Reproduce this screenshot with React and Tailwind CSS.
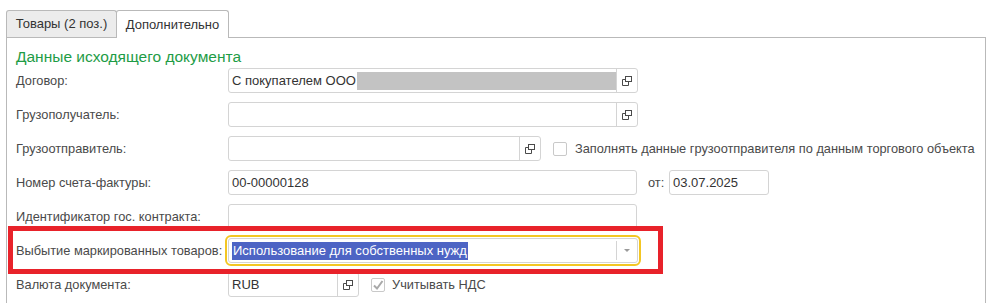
import { useState } from 'react';

function OpenIcon() {
  return (
    <svg width="10" height="10" viewBox="0 0 10 10" fill="none" stroke="#4a4a4a" strokeWidth="1">
      <rect x="3.5" y="0.5" width="6" height="5" />
      <path d="M3.5 3.5 H0.5 V9.5 H6.5 V5.5" />
    </svg>
  );
}

function Field({ width, value, button = false, children, className = '' }) {
  return (
    <div className={`flex h-[25px] shrink-0 items-stretch rounded-[3px] border border-[#d4d4d4] bg-white ${width} ${className}`}>
      <div className="flex min-w-0 flex-1 items-center overflow-hidden pl-[3px] text-[13px] text-[#333]">
        {children || value}
      </div>
      {button && (
        <div className="flex w-[21px] items-center justify-center border-l border-[#d4d4d4]">
          <OpenIcon />
        </div>
      )}
    </div>
  );
}

function Checkbox({ checked = false }) {
  return (
    <span className="flex h-[14px] w-[14px] items-center justify-center rounded-[2px] border border-[#c9c9c9] bg-white">
      {checked && (
        <svg width="12" height="12" viewBox="0 0 12 12" fill="none" stroke="#a9a9a9" strokeWidth="2">
          <path d="M2 6.5 L5 9.5 L10.5 2" />
        </svg>
      )}
    </span>
  );
}

function Row({ label, children }) {
  return (
    <div className="flex h-[25px] items-center">
      <div className="w-[212px] shrink-0 text-[12.8px] text-[#4a4a4a]">{label}</div>
      {children}
    </div>
  );
}

export default function App() {
  const [tab] = useState(1);

  return (
    <div className="h-[303px] w-[992px] overflow-hidden bg-white pt-[10px] font-['Liberation_Sans',Arial,sans-serif]">
      <div className="ml-[6px] flex h-[27px] items-stretch">
        <div className={`flex w-[111px] items-center justify-center rounded-t-[3px] border border-b-0 border-[#b9b9b9] text-[13px] text-[#333] ${tab === 0 ? 'bg-white' : 'bg-[#ececec]'}`}>
          Товары (2 поз.)
        </div>
        <div className="relative z-10 -ml-px flex h-[28px] w-[113px] items-center justify-center rounded-t-[3px] border border-b-0 border-[#b9b9b9] bg-white text-[13px] text-[#333]">
          Дополнительно
        </div>
      </div>

      <div className="relative ml-[6px] h-[300px] w-[980px] border border-[#b9b9b9] pl-[9px] pt-[9px]">
        <div className="h-[20px] text-[15.5px] leading-[20px] text-[#1e9c46]">Данные исходящего документа</div>

        <div className="mt-[1px] flex flex-col gap-[9px]">
          <Row label="Договор:">
            <Field width="w-[410px]" button>
              <span className="shrink-0">С покупателем ООО</span>
              <span className="ml-px h-[18px] w-[260px] shrink-0 bg-[#c3c3c3]" />
            </Field>
          </Row>

          <Row label="Грузополучатель:">
            <Field width="w-[410px]" button />
          </Row>

          <Row label="Грузоотправитель:">
            <Field width="w-[313px]" button />
            <div className="ml-[12px] flex items-center gap-[8px] text-[12.8px] text-[#4a4a4a]">
              <Checkbox />
              <span>Заполнять данные грузоотправителя по данным торгового объекта</span>
            </div>
          </Row>

          <Row label="Номер счета-фактуры:">
            <Field width="w-[409px]" value="00-00000128" />
            <span className="ml-[11px] w-[21px] text-[12.8px] text-[#4a4a4a]">от:</span>
            <Field width="w-[100px]" value="03.07.2025" />
          </Row>

          <Row label="Идентификатор гос. контракта:">
            <Field width="w-[409px]" />
          </Row>

          <Row label="Выбытие маркированных товаров:">
            <div className="flex h-[25px] w-[410px] shrink-0 items-stretch rounded-[3px] border border-[#d4d4d4] bg-white outline-2 outline-offset-1 outline-[#f3c623]">
              <div className="flex flex-1 items-center pl-[3px] text-[13px]">
                <span className="bg-[#4d64c4] px-px leading-[18px] text-white">Использование для собственных нужд</span>
              </div>
              <div className="my-[2px] flex w-[21px] items-center justify-center border-l border-[#d4d4d4]">
                <span className="h-0 w-0 border-x-[3px] border-t-[3px] border-x-transparent border-t-[#9a9a9a]" />
              </div>
            </div>
          </Row>

          <Row label="Валюта документа:">
            <Field width="w-[131px]" value="RUB" button />
            <div className="ml-[12px] flex items-center gap-[7px] text-[12.8px] text-[#4a4a4a]">
              <Checkbox checked />
              <span>Учитывать НДС</span>
            </div>
          </Row>
        </div>

        <div className="pointer-events-none absolute left-[1px] top-[188px] h-[48px] w-[655px] border-[5px] border-[#e8222a]" />
      </div>
    </div>
  );
}
